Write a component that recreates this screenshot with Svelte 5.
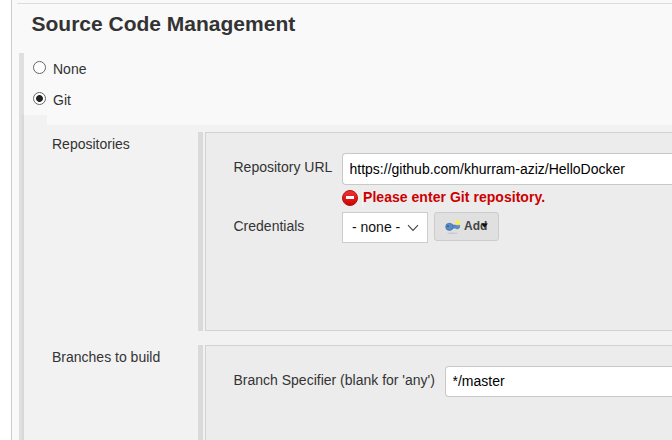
<script>
  const sources = ['None', 'Git'];
  let selected = $state('Git');
  let repositoryUrl = $state('https://github.com/khurram-aziz/HelloDocker');
  let branch = $state('*/master');
</script>

<main class="page">
  <section class="panel">
    <h1><span>Source Code Management</span></h1>
    <div class="scm">
      <div class="choices">
        {#each sources as source}
          <label class="choice">
            <input type="radio" name="scm" value={source} bind:group={selected} />
            <span>{source}</span>
          </label>
        {/each}
      </div>
      <div class="tab"></div>
      <div class="settings">
        <div class="row">
          <div class="name"><span>Repositories</span></div>
          <div class="group repos">
            <div class="field">
              <span class="label">Repository URL</span>
              <input class="text" type="text" bind:value={repositoryUrl} />
            </div>
            <div class="error">
              <svg width="16" height="16" viewBox="0 0 16 16">
                <defs>
                  <linearGradient id="stop" x1="0" y1="0" x2="0" y2="1">
                    <stop offset="0" stop-color="#ee3535" />
                    <stop offset="1" stop-color="#d00000" />
                  </linearGradient>
                </defs>
                <circle cx="8" cy="8" r="7.5" fill="url(#stop)" stroke="#b51010" />
                <rect x="4" y="6" width="8" height="3" fill="#fff" />
              </svg>
              <span>Please enter Git repository.</span>
            </div>
            <div class="field creds">
              <span class="label">Credentials</span>
              <button class="select">
                <span>- none -</span>
                <svg width="12" height="8" viewBox="0 0 12 8"><path d="M1 1.2 6 6.4 11 1.2" fill="none" stroke="#444" stroke-width="1.1" /></svg>
              </button>
              <button class="add">
                <svg class="key" width="16" height="16" viewBox="0 0 16 16">
                  <ellipse cx="7.5" cy="14.2" rx="5.5" ry=".8" fill="#c9c9c9" />
                  <path d="M5.5 6H14.6v2.8h-1.3v1.1h-1.6V9.2H5.5z" fill="#5c8cc7" stroke="#416fa9" stroke-width=".5" />
                  <ellipse cx="4.4" cy="7.8" rx="3.7" ry="3.6" fill="#5b8ac6" stroke="#3b6ba8" stroke-width=".7" />
                  <circle cx="3" cy="7.2" r=".9" fill="#2f5586" />
                  <circle cx="12.6" cy="3.7" r="2.7" fill="#f5e974" opacity=".7" />
                  <circle cx="12.6" cy="3.7" r="1.6" fill="#fff22a" />
                </svg>
                <span>Add</span>
                <svg class="caret" width="7" height="5" viewBox="0 0 7 5"><path d="M0 .5h7L3.5 4.8z" fill="#111" /></svg>
              </button>
            </div>
          </div>
        </div>
        <div class="row">
          <div class="name"><span>Branches to build</span></div>
          <div class="group branches">
            <div class="field">
              <span class="label branch">Branch Specifier (blank for 'any')</span>
              <input class="text" type="text" bind:value={branch} />
            </div>
          </div>
        </div>
      </div>
    </div>
  </section>
</main>

<style>
  * { box-sizing: border-box; }
  .page {
    width: 672px;
    height: 440px;
    overflow: hidden;
    padding-left: 11px;
    background: #fff;
    color: #333;
    font: 14px/20px "Liberation Sans", Arial, sans-serif;
  }
  .panel {
    height: 440px;
    padding: 3px 0 0 5px;
    border-left: 1px solid #ccc;
    background: #f9f9f9;
  }
  h1 {
    margin: 0;
    height: 50px;
    padding: 7px 0 0 14.5px;
    border-top: 1px solid #ddd;
    font-size: 21px;
    line-height: 25px;
  }
  .scm {
    height: 387px;
    margin-left: 2px;
    background: linear-gradient(#dfdfdf, #dfdfdf) 0 0 / 5px 100% no-repeat;
  }
  .choices { height: 62px; padding: 6px 0 0 14px; }
  .choice { display: flex; align-items: flex-start; height: 31px; }
  .choice input {
    appearance: none;
    width: 13px;
    height: 13px;
    margin: 2px 7px 0 0;
    border: 1px solid #666;
    border-radius: 50%;
    background: #fff;
  }
  .choice input:checked { background: radial-gradient(circle, #222 3px, #fff 3.8px); }
  .tab { width: 25px; height: 10px; margin-left: 3px; background: rgba(0, 0, 0, 0.027); }
  .settings {
    height: 315px;
    margin-left: 3px;
    padding-top: 7px;
    background: rgba(0, 0, 0, 0.027);
  }
  .row { display: flex; margin-bottom: 14px; }
  .name { width: 176px; padding: 2px 0 0 30px; }
  .group {
    flex: 1;
    margin-left: 7px;
    border: 1px solid #d2d2d2;
    border-right: 0;
    background: #ececec;
    box-shadow: -2px 0 #f2f2f2, -7px 0 #dadada;
    padding: 20px 0 0 27.5px;
  }
  .repos, .branches { height: 199px; }
  .field { display: flex; height: 32px; }
  .label { width: 108.5px; padding-top: 4px; flex: none; }
  .branch { width: 211.5px; }
  .text {
    flex: 1;
    min-width: 0;
    height: 32px;
    padding: 0 6.5px;
    border: 1px solid #c8c8c8;
    border-right: 0;
    border-radius: 4px 0 0 4px;
    background: #fff;
    color: #000;
    font: inherit;
  }
  .branches .text { height: 31px; padding-bottom: 2px; }
  .error {
    display: flex;
    height: 27px;
    padding: 5px 0 0 108.5px;
    gap: 4px;
    color: #c00;
    font-weight: bold;
    line-height: 15px;
    letter-spacing: 0.04px;
  }
  .error span { height: 17px; border-left: 1px solid #f7f7f7; }
  button { display: flex; align-items: center; margin: 0; font: inherit; }
  .select {
    width: 86px;
    height: 31px;
    padding: 0 9px 2px;
    gap: 6.5px;
    border: 1px solid #ccc;
    background: #fff;
    color: #111;
    white-space: nowrap;
  }
  .select svg { margin-top: 2px; }
  .add {
    width: 65px;
    height: 29px;
    margin-left: 6px;
    padding: 0 0 2px 10px;
    border: 1px solid #ccc;
    border-radius: 3px;
    background: #e0e0e0;
    color: #444;
    font-size: 12px;
    font-weight: bold;
  }
  .key { margin: 2px 3px 0 0; }
  .caret { margin-left: -6px; }
  svg { flex: none; }
</style>
